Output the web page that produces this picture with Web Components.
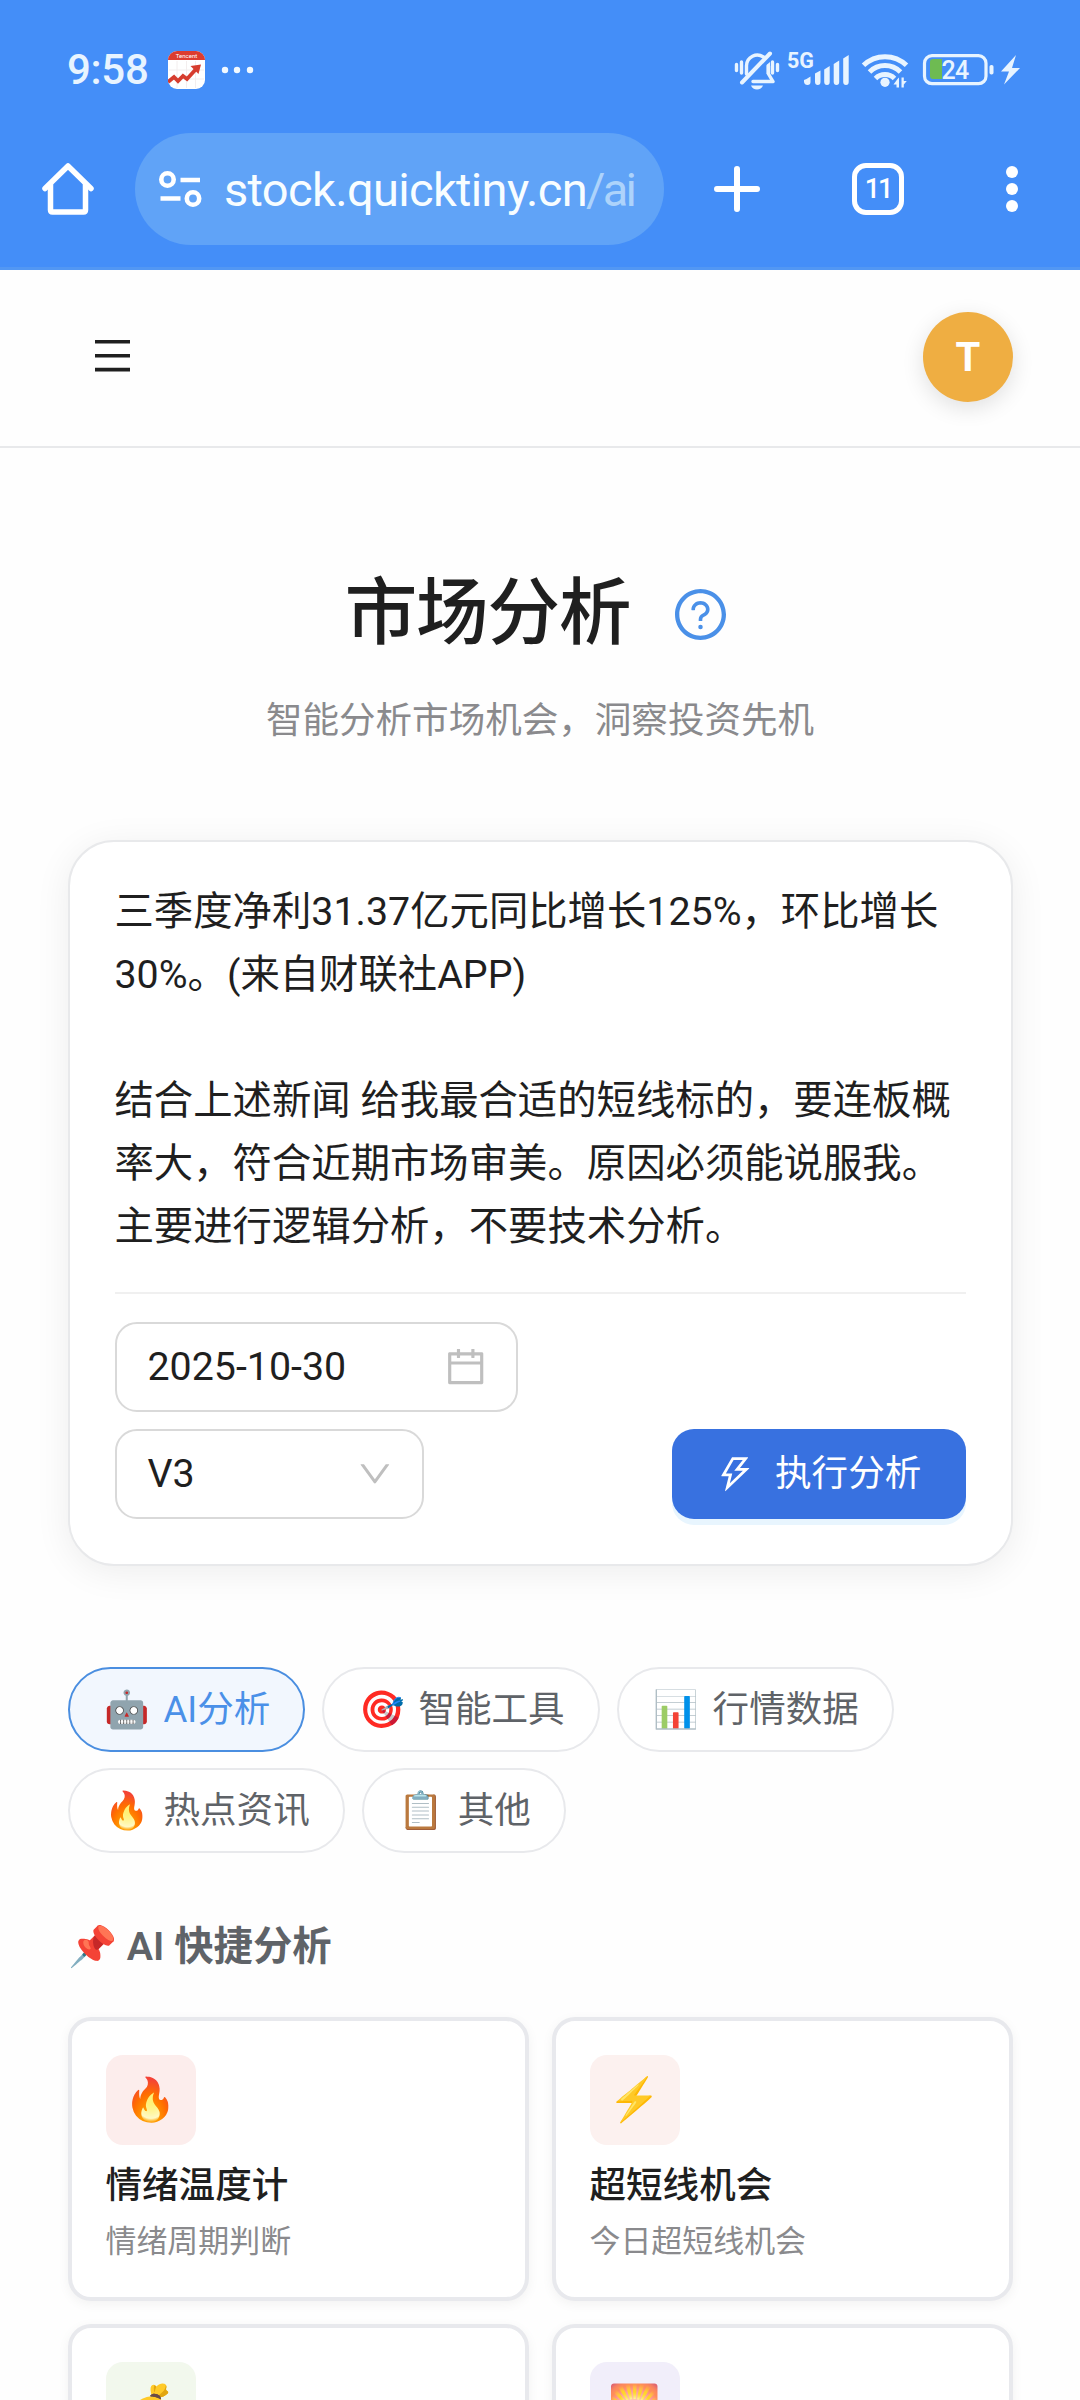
<!DOCTYPE html>
<html lang="zh-CN">
<head>
<meta charset="utf-8">
<title>市场分析</title>
<style>
  html, body { margin: 0; padding: 0; background: #fefefe; }
  body { width: 1080px; height: 2400px; overflow: hidden; font-family: Roboto, "Noto Sans CJK SC", "Noto Color Emoji", sans-serif; color: #1f1f1f; }
</style>
</head>
<body>
<market-app></market-app>

<script>
const define = (name, html) => {
  const tpl = document.createElement('template');
  tpl.innerHTML = '<style>*{box-sizing:border-box}:host{box-sizing:border-box;display:block}svg{display:block;flex:none}</style>' + html;
  customElements.define(name, class extends HTMLElement {
    constructor() {
      super();
      this.attachShadow({ mode: 'open' }).appendChild(tpl.content.cloneNode(true));
    }
  });
};

define('status-bar', `
<style>
  :host { height: 133px; padding: 50px 59px 0 67px; color: #e8f4ff; }
  .row { display: flex; align-items: center; height: 40px; }
  .time { font-size: 42px; line-height: 40px; font-weight: 500; width: 101px; letter-spacing: -.3px; }
  .right { margin-left: auto; overflow: visible; }
  text { font-family: Roboto, sans-serif; }
</style>
<div class="row">
  <span class="time">9:58</span>
  <svg width="37" height="38" viewBox="0 0 37 38">
    <rect width="37" height="38" rx="9" fill="#fff"/>
    <path d="M0 9a9 9 0 0 1 9-9h19a9 9 0 0 1 9 9z" fill="#dc3c30"/>
    <path d="M9 10v27M18.500 10v27M27.500 10v27M1 19h35M1 28h35" stroke="#f3eeee" stroke-width="1"/>
    <path d="M0 31l6-5 4 4 5-5 4 3 10-11" fill="none" stroke="#d63c2e" stroke-width="3.800"/>
    <path d="M22.500 15l10.500-1.500-2.500 9.500z" fill="#d63c2e"/>
    <text x="18.500" y="6.500" font-size="6" text-anchor="middle" fill="#fff">Tencent</text>
  </svg>
  <svg width="40" height="38" viewBox="0 0 40 38" style="margin-left:15px">
    <g fill="#f2f9ff"><circle cx="5" cy="19" r="3.200"/><circle cx="17" cy="19" r="3.200"/><circle cx="30" cy="19" r="3.200"/></g>
  </svg>
  <svg class="right" width="288" height="40" viewBox="733 50 288 40" fill="#e8f4ff">
    <g fill="none" stroke="#e8f4ff" stroke-width="3.400" stroke-linecap="round">
      <path d="M736.500 64.500v6M741.500 62v11M772.500 62v11M777.500 64.500v6"/>
      <path d="M746.500 74v-8.500a10.800 10.800 0 0 1 17-8.500" />
      <path d="M770 53.500l-28 29" stroke-width="4"/>
      <path d="M768.500 66v8l4.500 7.500h-20" stroke-linejoin="round"/>
    </g>
    <path d="M766.500 65l3.500-3v12h-3.500zM751 85.500h12c-1 2.600-3.300 4-6 4s-5-1.400-6-4z"/>
    <text x="787" y="67.500" font-size="21.500" font-weight="700">5G</text>
    <path d="M804 80q3-1 6.500-3.500v5.500q0 3-3 3t-3.500-3zM815 73.500l5.500-3v11.500q0 3-2.700 3t-2.800-3zM824.200 69.500l5.500-3.500v16q0 3-2.700 3t-2.800-3zM833.700 64l5.500-3.500v21.500q0 3-2.700 3t-2.800-3zM843.200 58.500l5.500-3.500v27q0 3-2.700 3t-2.800-3z"/>
    <g fill="none" stroke="#e8f4ff" stroke-width="5">
      <path d="M863.500 65.300a31 31 0 0 1 43 0"/>
      <path d="M869.500 72a22 22 0 0 1 31 0"/>
      <path d="M875.500 78.500a13.500 13.500 0 0 1 19 0"/>
    </g>
    <circle cx="885" cy="82.300" r="4.600"/>
    <path d="M897.500 79l1.500-1.500v10h-2.500v-3h-3zM901.500 77.500h2.300v3.500h3l-3 3.500v3h-2.300z" />
    <rect x="924.500" y="55.700" width="61.500" height="28" rx="7.500" fill="none" stroke="#e8f4ff" stroke-width="3.200"/>
    <path d="M930 62q0-3 3-3h9v20h-9q-3 0-3-3z" fill="#6ebb52"/>
    <rect x="989.500" y="65" width="4" height="9.500" rx="1.800"/>
    <text x="955" y="79" font-size="25" text-anchor="middle" font-weight="500" letter-spacing="-.7">24</text>
    <path d="M1016 55l-15 16.500h8l-5 13 16-16.500h-8z"/>
  </svg>
</div>`);

define('browser-toolbar', `
<style>
  :host { height: 137px; border-bottom: 3px solid #5297f3; }
  .row { display: flex; align-items: center; height: 112px; padding: 0 62px 0 42px; }
  .address { display: flex; align-items: center; width: 529px; height: 112px; margin-left: 41px; border-radius: 56px; background: #60a3f7; padding-left: 24px; }
  .url { margin: 2px 0 0 22px; font-size: 47px; line-height: 56px; color: #f8fdff; letter-spacing: -.650px; white-space: nowrap; }
  .url i { font-style: normal; color: #add3fb; letter-spacing: -2.800px; margin-left: -1px; }
  .tabs { display: flex; align-items: center; justify-content: center; width: 52px; height: 52px; margin-left: 92px; border: 5.500px solid #fff; border-radius: 14px; font-size: 27px; font-weight: 500; color: #fff; letter-spacing: -2px; line-height: 30px; }
</style>
<div class="row">
  <svg width="52" height="52" viewBox="0 0 52 52" fill="none" stroke="#fff" stroke-width="5.500" stroke-linecap="round" stroke-linejoin="round"><path d="M3 25.500L26 3l23 22.500"/><path d="M8.500 22v25q0 2 2 2h31q2 0 2-2V22"/></svg>
  <div class="address">
    <svg width="43" height="36" viewBox="0 0 43 36" fill="none" stroke="#fff" stroke-width="4.600"><circle cx="8.500" cy="8.500" r="6.200"/><path d="M21.500 9H41M1.500 27.500h20"/><circle cx="34" cy="27.500" r="6.200"/></svg>
    <span class="url">stock.quicktiny.cn<i>/ai</i></span>
  </div>
  <svg width="46" height="46" viewBox="0 0 46 46" stroke="#fff" stroke-width="6" stroke-linecap="round" style="margin-left:50px"><path d="M23 3v40M3 23h40"/></svg>
  <div class="tabs">11</div>
  <svg width="12" height="46" viewBox="0 0 12 46" fill="#fff" style="margin-left:auto"><circle cx="6" cy="6" r="6"/><circle cx="6" cy="23" r="6"/><circle cx="6" cy="40" r="6"/></svg>
</div>`);

define('site-header', `
<style>
  :host { display: flex; align-items: flex-start; justify-content: space-between; height: 178px; padding: 42px 67px 0 92px; border-bottom: 2px solid #e8e9eb; }
  .menu { margin-top: 25px; }
  .avatar { width: 90px; height: 90px; border-radius: 50%; background: #efae42; color: #fff; font-size: 40px; font-weight: 700; line-height: 91px; text-align: center; box-shadow: 0 6px 22px rgba(0,0,0,.12); }
</style>
<svg class="menu" width="40" height="40" viewBox="0 0 40 40" fill="#1f1f1f"><path d="M3 3h35v3.600H3zM3 17h35v3.600H3zM3 30.800h35v3.600H3z"/></svg>
<div class="avatar">T</div>`);

define('page-hero', `
<style>
  :host { padding-top: 122px; height: 392px; }
  .title { display: flex; align-items: center; justify-content: center; height: 88px; padding-right: 9px; }
  h1 { margin: 0; font-size: 72.500px; line-height: 88px; font-weight: 500; letter-spacing: -1.100px; color: #1f1f1f; }
  svg { margin: 1px 0 0 45px; }
  p { margin: 34px 0 0; text-align: center; font-size: 36.560px; line-height: 58px; color: #8a8a8d; }
</style>
<div class="title"><h1>市场分析</h1>
<svg width="51" height="51" viewBox="64 64 896 896" fill="#4a90e8"><path d="M512 64C264.600 64 64 264.600 64 512s200.600 448 448 448 448-200.600 448-448S759.400 64 512 64zm0 820c-205.400 0-372-166.600-372-372s166.600-372 372-372 372 166.600 372 372-166.600 372-372 372z"/><path d="M623.600 316.700C593.600 290.400 554 276 512 276s-81.600 14.500-111.600 40.700C369.200 344 352 380.700 352 420v7.600c0 4.400 3.600 8 8 8h48c4.400 0 8-3.600 8-8V420c0-44.100 43.100-80 96-80s96 35.900 96 80c0 31.100-22 59.600-56.100 72.700-21.200 8.100-39.200 22.300-52.100 40.900-13.100 19-19.900 41.800-19.900 64.900V620c0 4.400 3.600 8 8 8h48c4.400 0 8-3.600 8-8v-22.700a48.300 48.300 0 0 1 30.900-44.800c59-22.700 97.100-74.700 97.100-132.500.1-39.300-17.100-76-48.300-103.300zM472 732a40 40 0 1 0 80 0 40 40 0 1 0-80 0z"/></svg></div>
<p>智能分析市场机会，洞察投资先机</p>`);

define('field-box', `
<style>
  :host { display: flex; align-items: center; justify-content: space-between; height: 90px; border: 2px solid #d9d9d9; border-radius: 22px; padding: 0 30px 0 31px; font-size: 39.375px; line-height: 60px; color: #1f1f1f; background: #fff; }
</style>
<slot></slot><slot name="icon"></slot>`);

define('analysis-composer', `
<style>
  :host { width: 945px; height: 726px; margin: 0 auto; padding: 38px 45px 0 45px; border: 2px solid #e8e9eb; border-radius: 46px; background: #fff; box-shadow: 0 6px 36px rgba(0,0,0,.07); }
  .text { height: 412px; font-size: 39.375px; line-height: 63px; color: #1f1f1f; white-space: nowrap; }
  .controls { border-top: 2px solid #f0f0f0; padding-top: 28px; display: flex; flex-direction: column; gap: 17px; }
  .line { display: flex; justify-content: space-between; }
  .date { width: 403px; }
  .model { width: 309px; }
  .run { display: flex; align-items: center; width: 294px; height: 90px; padding-left: 45px; border-radius: 22px; background: #3871e0; color: #fff; font-size: 36.560px; line-height: 50px; box-shadow: 0 6px 0 #e8f5fe; }
  .run span { margin-left: 22px; }
</style>
<div class="text">三季度净利31.37亿元同比增长125%，环比增长<br>30%。(来自财联社APP)<br><br>结合上述新闻 给我最合适的短线标的，要连板概<br>率大，符合近期市场审美。原因必须能说服我。<br>主要进行逻辑分析，不要技术分析。</div>
<div class="controls">
  <field-box class="date">2025-10-30<svg slot="icon" width="39.400" height="39.400" viewBox="64 64 896 896" fill="#bfbfbf"><path d="M880 184H712v-64c0-4.400-3.600-8-8-8h-56c-4.400 0-8 3.600-8 8v64H384v-64c0-4.400-3.600-8-8-8h-56c-4.400 0-8 3.600-8 8v64H144c-17.700 0-32 14.300-32 32v664c0 17.700 14.300 32 32 32h736c17.700 0 32-14.300 32-32V216c0-17.700-14.300-32-32-32zm-40 656H184V460h656v380zM184 392V256h128v48c0 4.400 3.600 8 8 8h56c4.400 0 8-3.600 8-8v-48h256v48c0 4.400 3.600 8 8 8h56c4.400 0 8-3.600 8-8v-48h128v136H184z"/></svg></field-box>
  <div class="line">
    <field-box class="model">V3<svg slot="icon" width="33.750" height="33.750" viewBox="64 64 896 896" fill="#bfbfbf"><path d="M884 256h-75c-5.100 0-9.900 2.500-12.900 6.600L512 654.200 227.900 262.600c-3-4.100-7.800-6.600-12.900-6.600h-75c-6.500 0-10.300 7.400-6.500 12.700l352.600 486.100c12.800 17.600 39 17.600 51.700 0l352.600-486.100c3.900-5.300.1-12.700-6.400-12.700z"/></svg></field-box>
    <div class="run"><svg width="36.560" height="36.560" viewBox="64 64 896 896" fill="#fff"><path d="M848 359.300H627.700L825.800 109c4.100-5.300.4-13-6.300-13H436c-2.800 0-5.500 1.500-6.900 4L170 547.500c-3.100 5.300.7 12 6.900 12h174.400l-89.400 357.600c-1.900 7.800 7.500 13.300 13.300 7.700L853.500 373c5.200-4.900 1.700-13.700-5.500-13.700zM378.200 732.500l60.300-241H281.100l189.600-327.400h224.600L487 427.400h211L378.200 732.500z"/></svg><span>执行分析</span></div>
  </div>
</div>`);

define('filter-chip', `
<style>
  :host { display: flex; align-items: center; height: 85px; border: 2px solid #e8e9ec; border-radius: 45px; padding: 0 33px 0 35px; background: #fff; color: #5f6368; font-size: 36.560px; line-height: 50px; white-space: nowrap; }
  :host([active]) { border-color: #4a8ee0; background: #f2f7fe; color: #4a90e8; }
  .emoji { width: 45.500px; margin-right: 13.500px; }
</style>
<span class="emoji"><slot name="emoji"></slot></span><slot></slot>`);

define('chip-group', `
<style>:host { display: flex; flex-wrap: wrap; gap: 16px 17px; padding: 101px 67px 0 67.500px; }</style>
<slot></slot>`);

define('section-title', `
<style>:host { display: flex; padding: 62px 67px 0 68px; font-size: 39.375px; line-height: 64px; font-weight: 600; color: #5f6368; white-space: pre; }</style>
<slot></slot>`);

define('quick-card', `
<style>
  :host { height: 284px; border: 4px solid #e8e9ed; border-radius: 23px; background: #fff; padding: 34px 33.500px; box-shadow: 0 3px 12px rgba(0,0,0,.05); }
  .icon { width: 90px; height: 90px; border-radius: 17px; background: var(--tint); font-size: 42.190px; line-height: 90px; display: flex; justify-content: center; }
  .name { margin-top: 14px; font-size: 36.560px; line-height: 54px; font-weight: 500; color: #1f1f1f; }
  .desc { margin-top: 7px; font-size: 30.940px; line-height: 44px; color: #8a8a8d; }
</style>
<div class="icon"><slot name="emoji"></slot></div>
<div class="name"><slot name="name"></slot></div>
<div class="desc"><slot></slot></div>`);

define('card-grid', `
<style>:host { display: grid; grid-template-columns: 461px 461px; gap: 23px; padding: 38px 67px 0 68px; }</style>
<slot></slot>`);

define('market-app', `
<style>
  :host { display: flex; flex-direction: column; width: 1080px; height: 2400px; overflow: hidden; }
  :host > * { flex: none; }
  .top { background: #448ef8; }
</style>
<div class="top"><status-bar></status-bar><browser-toolbar></browser-toolbar></div>
<site-header></site-header>
<page-hero></page-hero>
<analysis-composer></analysis-composer>
<chip-group>
  <filter-chip active><span slot="emoji">🤖</span>AI分析</filter-chip>
  <filter-chip><span slot="emoji">🎯</span>智能工具</filter-chip>
  <filter-chip><span slot="emoji">📊</span>行情数据</filter-chip>
  <filter-chip><span slot="emoji">🔥</span>热点资讯</filter-chip>
  <filter-chip><span slot="emoji">📋</span>其他</filter-chip>
</chip-group>
<section-title>📌 AI 快捷分析</section-title>
<card-grid>
  <quick-card style="--tint:#fcedec"><span slot="emoji">🔥</span><span slot="name">情绪温度计</span>情绪周期判断</quick-card>
  <quick-card style="--tint:#fcf1ef"><span slot="emoji">⚡</span><span slot="name">超短线机会</span>今日超短线机会</quick-card>
  <quick-card style="--tint:#f2f8ed"><span slot="emoji">💰</span></quick-card>
  <quick-card style="--tint:#f1eefa"><span slot="emoji">🌅</span></quick-card>
</card-grid>`);
</script>
</body>
</html>
